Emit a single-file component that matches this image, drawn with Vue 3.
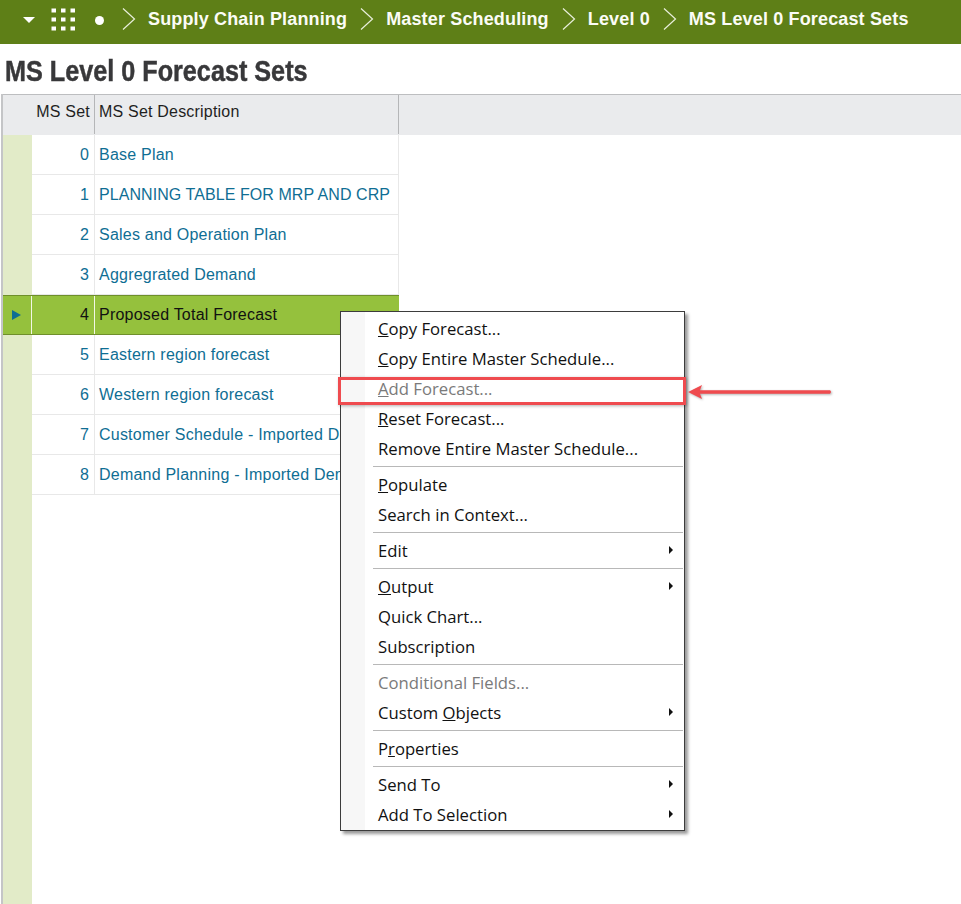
<script setup>
const crumbs = ['Supply Chain Planning', 'Master Scheduling', 'Level 0', 'MS Level 0 Forecast Sets']
const rows = [
  [0, 'Base Plan'],
  [1, 'PLANNING TABLE FOR MRP AND CRP'],
  [2, 'Sales and Operation Plan'],
  [3, 'Aggregrated Demand'],
  [4, 'Proposed Total Forecast'],
  [5, 'Eastern region forecast'],
  [6, 'Western region forecast'],
  [7, 'Customer Schedule - Imported Demand'],
  [8, 'Demand Planning - Imported Demand'],
]
const menu = [
  [
    { pre: '', key: 'C', post: 'opy Forecast...' },
    { pre: '', key: 'C', post: 'opy Entire Master Schedule...' },
    { pre: '', key: 'A', post: 'dd Forecast...', off: true },
    { pre: '', key: 'R', post: 'eset Forecast...' },
    { pre: 'Remove Entire Master Schedule...', key: '', post: '' },
  ],
  [
    { pre: '', key: 'P', post: 'opulate' },
    { pre: 'Search in Context...', key: '', post: '' },
  ],
  [{ pre: 'Edit', key: '', post: '', sub: true }],
  [
    { pre: '', key: 'O', post: 'utput', sub: true },
    { pre: 'Quick Chart...', key: '', post: '' },
    { pre: 'Subscription', key: '', post: '' },
  ],
  [
    { pre: 'Conditional Fields...', key: '', post: '', off: true },
    { pre: 'Custom ', key: 'O', post: 'bjects', sub: true },
  ],
  [{ pre: 'P', key: 'r', post: 'operties' }],
  [
    { pre: 'Send To', key: '', post: '', sub: true },
    { pre: 'Add To Selection', key: '', post: '', sub: true },
  ],
]
</script>

<template>
  <div class="page">
    <header class="bar">
      <span class="caret"></span>
      <svg class="apps" width="24" height="24" viewBox="0 0 24 24" fill="#fff">
        <rect v-for="c in 9" :key="c" :x="((c - 1) % 3) * 9.5 + 0.5" :y="Math.floor((c - 1) / 3) * 9 + 0.5" width="4.5" height="4" />
      </svg>
      <span class="dot"></span>
      <template v-for="c in crumbs" :key="c">
        <svg class="chev" width="14" height="24" viewBox="0 0 14 24" fill="none" stroke="#e9efdc" stroke-width="1.2">
          <path d="M1 1.5 L12.5 12 L1 22.5" />
        </svg>
        <span class="crumb">{{ c }}</span>
      </template>
    </header>

    <h1 class="title">MS Level 0 Forecast Sets</h1>

    <section class="grid">
      <div class="head">
        <div class="h-gutter"></div>
        <div class="h-num">MS Set</div>
        <div class="h-desc">MS Set Description</div>
      </div>
      <div class="body">
        <div v-for="r in rows" :key="r[0]" class="row" :class="{ sel: r[0] === 4 }">
          <div class="gutter"><span v-if="r[0] === 4" class="pointer"></span></div>
          <div class="num">{{ r[0] }}</div>
          <div class="desc" :class="{ caps: r[0] === 1 }">{{ r[1] }}</div>
        </div>
      </div>
    </section>

    <nav class="menu">
      <div v-for="(g, i) in menu" :key="i" class="group">
        <div v-for="(m, j) in g" :key="j" class="item" :class="{ off: m.off }">
          <span class="label">{{ m.pre }}<u v-if="m.key">{{ m.key }}</u>{{ m.post }}</span>
          <span v-if="m.sub" class="sub"></span>
        </div>
      </div>
    </nav>

    <div class="mark"></div>
    <svg class="arrow" width="150" height="24" viewBox="0 0 150 24">
      <path d="M2 10 L16 3 L14 8.3 L144 8.3 Q146 10 144 11.7 L14 11.7 L16 17 Z" fill="#ef4b4f" />
    </svg>
  </div>
</template>

<style>
html, body { margin: 0; background: #fff; }
</style>

<style scoped>
.page {
  position: relative;
  width: 961px;
  height: 904px;
  overflow: hidden;
  background: #fff;
  font-family: "Liberation Sans", Arial, sans-serif;
}
.bar {
  height: 44px;
  background: #5e7f17;
  display: flex;
  align-items: center;
  padding-left: 23px;
  box-sizing: border-box;
  color: #fff;
}
.caret {
  width: 0;
  height: 0;
  border-left: 6px solid transparent;
  border-right: 6px solid transparent;
  border-top: 6px solid #fff;
  margin: -4px 16px 0 0;
}
.apps { margin: -5px 20px 0 0; flex: none; }
.dot {
  width: 9px;
  height: 9px;
  border-radius: 50%;
  background: #fff;
  margin: -4px 18px 0 0;
  flex: none;
}
.chev { margin: -6px 12px 0 0; flex: none; }
.crumb {
  font-size: 18px;
  font-weight: 700;
  letter-spacing: 0.15px;
  margin: -6px 13px 0 0;
  white-space: nowrap;
  color: #fbfcf6;
}
.title {
  margin: 0;
  height: 50px;
  box-sizing: border-box;
  padding: 9px 0 0 5px;
  font-size: 30px;
  line-height: 36px;
  font-weight: 700;
  color: #38383a;
  white-space: nowrap;
  -webkit-text-stroke: 0.5px #38383a;
  transform: scaleX(0.84);
  transform-origin: 5px 0;
}
.grid {
  margin-left: 1px;
  border-left: 2px solid #c4c5c7;
  height: 810px;
  background: linear-gradient(#e2ebc8, #e2ebc8) 0 0 / 29px 100% no-repeat;
}
.head {
  display: flex;
  height: 41px;
  box-sizing: border-box;
  background: #eaebed;
  border-top: 1px solid #bdbec0;
  font-size: 16px;
  letter-spacing: 0.2px;
  color: #1f1f1f;
}
.h-gutter { width: 29px; flex: none; }
.h-num {
  width: 63px;
  box-sizing: border-box;
  text-align: right;
  padding: 8px 4px 0 0;
  border-right: 1px solid #b5b6b8;
  height: 39px;
}
.h-desc {
  width: 304px;
  box-sizing: border-box;
  padding: 8px 0 0 4px;
  border-right: 1px solid #b5b6b8;
  height: 39px;
}
.row {
  display: flex;
  width: 396px;
  height: 40px;
  box-sizing: border-box;
  font-size: 16px;
  line-height: 39px;
  color: #0f6e94;
}
.gutter {
  width: 29px;
  flex: none;
  box-sizing: border-box;
  position: relative;
}
.num {
  width: 63px;
  flex: none;
  box-sizing: border-box;
  text-align: right;
  padding-right: 5px;
  border-right: 1px solid #e8e8e8;
  border-bottom: 1px solid #e8e8e8;
  background: #fff;
}
.desc {
  width: 304px;
  flex: none;
  box-sizing: border-box;
  padding-left: 4px;
  letter-spacing: 0.22px;
  border-right: 1px solid #e8e8e8;
  border-bottom: 1px solid #e8e8e8;
  background: #fff;
  white-space: nowrap;
  overflow: hidden;
}
.desc.caps { letter-spacing: 0.07px; }
.row.sel {
  background: #95c13d;
  color: #111;
  border-top: 1px solid #6f8f2b;
  border-bottom: 1px solid #6f8f2b;
  line-height: 38px;
}
.row.sel .gutter { border-right: 1px solid #f3f7e6; }
.row.sel .num, .row.sel .desc {
  background: #95c13d;
  border-bottom: 0;
}
.row.sel .num { border-right: 1px solid #f3f7e6; }
.row.sel .desc { border-right: 0; }
.pointer {
  position: absolute;
  left: 9px;
  top: 14px;
  width: 0;
  height: 0;
  border-top: 5px solid transparent;
  border-bottom: 5px solid transparent;
  border-left: 9px solid #0f6e94;
}
.menu {
  position: absolute;
  left: 340px;
  top: 311px;
  width: 345px;
  height: 520px;
  box-sizing: border-box;
  padding-top: 2px;
  background: linear-gradient(90deg, #f7f7f7 24px, #fff 24px);
  border: 1px solid #3c3c3c;
  box-shadow: 3px 3px 3px rgba(0, 0, 0, 0.4);
  font-family: "Open Sans", "Noto Sans", sans-serif;
  font-size: 16.7px;
  color: #111;
}
.group + .group {
  margin-top: 2px;
  padding-top: 4px;
  position: relative;
}
.group + .group::before {
  content: "";
  position: absolute;
  left: 32px;
  right: 1px;
  top: 0;
  height: 1px;
  background: #b8b8b8;
}
.item {
  height: 30px;
  display: flex;
  align-items: center;
  justify-content: space-between;
  padding: 0 11px 0 37px;
  white-space: nowrap;
}
.label { margin-top: -2px; }
.item.off { color: #7a7a7a; }
.sub {
  width: 0;
  height: 0;
  border-top: 4px solid transparent;
  border-bottom: 4px solid transparent;
  border-left: 4px solid #111;
  margin-top: -3px;
}
.mark {
  position: absolute;
  left: 338px;
  top: 377px;
  width: 348px;
  height: 28px;
  box-sizing: border-box;
  border: 3px solid #ef4b4f;
  box-shadow: 1px 1px 3px rgba(0, 0, 0, 0.3);
}
.arrow {
  position: absolute;
  left: 686px;
  top: 382px;
  filter: drop-shadow(1px 1px 1px rgba(0, 0, 0, 0.3));
}
</style>
